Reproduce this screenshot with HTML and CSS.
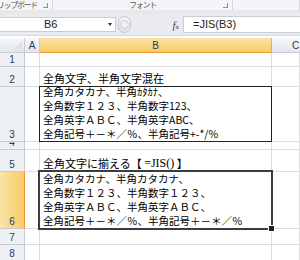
FILE: index.html
```html
<!DOCTYPE html>
<html lang="ja">
<head>
    <meta charset="UTF-8">
    <title>JIS関数 - 全角文字に揃える</title>
    <link rel="stylesheet" href="styles.css">
</head>
<body>
    <!-- リボンのグループ名 -->
    <div class="ribbon">
        <div class="group group-clip"><span class="group-name">クリップボード</span><span class="launcher"></span></div>
        <div class="group group-font"><span class="group-name">フォント</span><span class="launcher"></span></div>
        <div class="group"></div>
    </div>

    <!-- 数式バー -->
    <div class="formula-bar">
        <div class="name-box"><span class="name">B6</span><span class="drop"></span></div>
        <div class="grip"><span></span></div>
        <div class="fx"><i>f</i><small>x</small></div>
        <div class="formula">=JIS(B3)</div>
    </div>

    <!-- シート -->
    <div class="sheet">
        <div class="head corner"><span></span></div>
        <div class="head col">A</div>
        <div class="head col active">B</div>
        <div class="head col col-c">C</div>

        <div class="head row">1</div>
        <div class="cell"></div>
        <div class="cell"></div>
        <div class="cell"></div>

        <div class="head row">2</div>
        <div class="cell"></div>
        <div class="cell title">全角文字、半角文字混在</div>
        <div class="cell"></div>

        <div class="head row">3</div>
        <div class="cell"></div>
        <div class="cell boxed">全角カタカナ、半角ｶﾀｶﾅ、<br>全角数字１２３、半角数字123、<br>全角英字ＡＢＣ、半角英字ABC、<br>全角記号＋－＊／％、半角記号+-*/%</div>
        <div class="cell"></div>

        <div class="head row">4</div>
        <div class="cell"></div>
        <div class="cell"></div>
        <div class="cell"></div>

        <div class="head row">5</div>
        <div class="cell"></div>
        <div class="cell title">全角文字に揃える【&nbsp;<span class="fn">=JIS()</span>&nbsp;】</div>
        <div class="cell"></div>

        <div class="head row active">6</div>
        <div class="cell"></div>
        <div class="cell boxed selected">全角カタカナ、半角カタカナ、<br>全角数字１２３、半角数字１２３、<br>全角英字ＡＢＣ、半角英字ＡＢＣ、<br>全角記号＋－＊／％、半角記号＋－＊／％</div>
        <div class="cell"></div>

        <div class="head row">7</div>
        <div class="cell"></div>
        <div class="cell"></div>
        <div class="cell"></div>

        <div class="head row">8</div>
        <div class="cell"></div>
        <div class="cell"></div>
        <div class="cell"></div>

        <div class="head row last"></div>
        <div class="cell"></div>
        <div class="cell"></div>
        <div class="cell"></div>
    </div>
</body>
</html>
```

FILE: styles.css
```css
body {
    margin: 0;
    width: 300px;
    height: 260px;
    overflow: hidden;
    background: #fff;
    font-family: "Noto Sans CJK JP", "Noto Sans", sans-serif;
}

/* ---- リボン ---- */
.ribbon {
    display: flex;
    height: 10px;
    background: #f4f5f7;
    border-bottom: 4px solid #e6e8eb;
    font-size: 8px;
    line-height: 10px;
    letter-spacing: -1.3px;
    color: #555;
}
.group {
    position: relative;
    flex: 1;
    display: flex;
    align-items: center;
    justify-content: center;
    border-right: 1px solid #d4d8dd;
}
.group-clip {
    flex: 0 0 53px;
    justify-content: flex-end;
    padding-right: 15px;
    box-sizing: border-box;
    overflow: hidden;
    white-space: nowrap;
}
.group-font {
    flex: 0 0 179px;
}
.launcher {
    position: absolute;
    right: 4px;
    top: 3px;
    width: 4px;
    height: 4px;
    border-right: 1px solid #8a8f96;
    border-bottom: 1px solid #8a8f96;
}

/* ---- 数式バー ---- */
.formula-bar {
    display: flex;
    align-items: center;
    height: 21px;
    background: #e9ebee;
    border-bottom: 1px solid #d6d9dd;
}
.name-box {
    position: relative;
    width: 116px;
    height: 15px;
    background: #fff;
    border: 1px solid #c9ced4;
    border-left: none;
    box-sizing: border-box;
    font-family: "Liberation Sans", sans-serif;
    font-size: 11px;
    line-height: 13px;
    color: #222;
}
.name {
    position: absolute;
    left: 44px;
}
.drop {
    position: absolute;
    right: 3px;
    top: 5px;
    border-left: 2.5px solid transparent;
    border-right: 2.5px solid transparent;
    border-top: 3px solid #333;
}
.grip {
    width: 13px;
    height: 17px;
    margin-left: 2px;
    border: 1px solid #c2c7ce;
    border-radius: 8px;
    background: linear-gradient(#f6f7f9, #e1e4e8);
    box-sizing: border-box;
    display: flex;
    align-items: center;
    justify-content: center;
}
.grip span {
    width: 7px;
    height: 7px;
    border-radius: 50%;
    border: 1px solid #c6cbd1;
    background: #eef0f2;
}
.fx {
    width: 52px;
    text-align: right;
    padding-right: 4px;
    box-sizing: border-box;
    font-family: "Liberation Serif", serif;
    font-size: 11px;
    color: #444;
}
.fx small {
    font-size: 7px;
}
.formula {
    flex: 1;
    height: 17px;
    background: #fff;
    border: 1px solid #c9ced4;
    border-right: none;
    box-sizing: border-box;
    padding-left: 9px;
    font-family: "Liberation Sans", sans-serif;
    font-size: 11px;
    line-height: 15px;
    color: #222;
}

/* ---- シート ---- */
.sheet {
    display: grid;
    grid-template-columns: 25px 15px 232px 28px;
    grid-template-rows: 15px 14px 20px 55px 8px 22px 57px 16px 16px 3px;
    margin-top: 2px;
}
.head {
    box-sizing: border-box;
    background: linear-gradient(#f6f8fa, #e3e7ec);
    border-right: 1px solid #c5ccd5;
    border-bottom: 1px solid #c5ccd5;
    font-family: "Liberation Sans", sans-serif;
    font-size: 10px;
    color: #2a3a55;
    display: flex;
    align-items: center;
    justify-content: center;
    overflow: hidden;
}
.corner {
    position: relative;
}
.corner span {
    position: absolute;
    right: 2px;
    bottom: 2px;
    border-left: 9px solid transparent;
    border-bottom: 9px solid #dfe3e8;
}
.col.active {
    background: linear-gradient(#fbe3a8, #f6cd65);
    border-bottom-color: #f29536;
    border-right-color: #e8b45a;
}
.col-c {
    justify-content: flex-start;
    padding-left: 20px;
    border-right: none;
}
.row {
    background: #eef1f4;
    align-items: flex-end;
    padding-bottom: 1px;
}
.row.active {
    background: linear-gradient(90deg, #fbe3a8, #f6cd65);
    border-right-color: #f29536;
}
.row.last {
    border-bottom: none;
}
.cell {
    box-sizing: border-box;
    border-right: 1px solid #dadcdd;
    border-bottom: 1px solid #dadcdd;
    font-size: 10.5px;
    line-height: 14px;
    color: #000;
    white-space: nowrap;
    overflow: hidden;
}
.title {
    display: flex;
    align-items: flex-end;
    padding-left: 3px;
    padding-bottom: 1px;
    font-size: 11px;
}
.fn {
    font-family: "Liberation Serif", serif;
    font-size: 12px;
}
.boxed {
    border: 1px solid #222;
    margin: -1px 0 0 -1px;
    padding: 0 0 0 3px;
    display: flex;
    flex-direction: column;
    justify-content: flex-end;
}
.selected {
    position: relative;
    overflow: visible;
}
.selected::after {
    content: "";
    position: absolute;
    inset: -2px;
    border: 2px solid #3c3c3c;
}
.selected::before {
    content: "";
    position: absolute;
    right: -4px;
    bottom: -4px;
    width: 5px;
    height: 5px;
    background: #222;
    border: 1px solid #fff;
    z-index: 1;
}
```
